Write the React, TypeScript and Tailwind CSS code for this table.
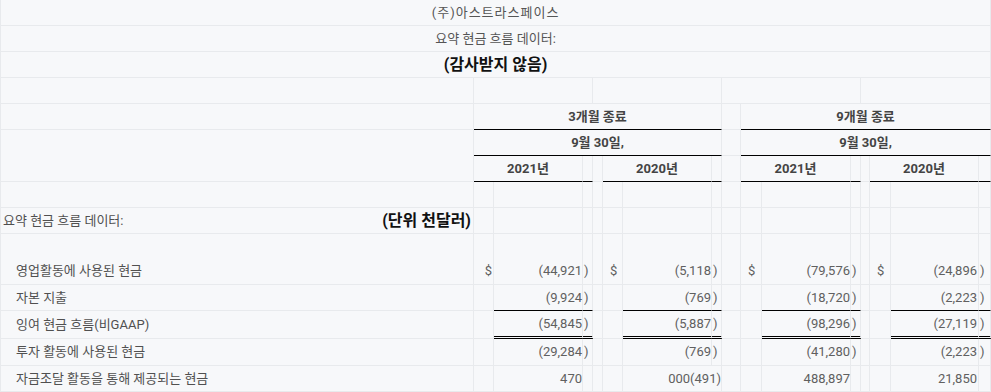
import React from "react"

type Cell = {
  span?: number
  rowSpan?: number
  text?: React.ReactNode
  cls?: string
}

const FONT = { fontFamily: "Roboto, 'Noto Sans CJK KR', sans-serif" }

const base = "border-r border-b border-[#e8eaed] p-0 whitespace-nowrap overflow-visible"
const black = "border-b-black"
const dbl = "border-b-[3px] border-b-black [border-bottom-style:double]"
const num = "text-right pr-0 text-[#606060]"
const par = "text-left pl-px text-[#606060]"
const head = "text-center font-bold text-[#444]"

// one data row: label, then four columns of ($, number, paren)
function dataRow(label: string, vals: [string, string][], dollar: boolean, line?: string): Cell[] {
  const d = dollar ? "$" : ""
  const b = line ?? ""
  return [
    { text: label, cls: "pl-[15px] text-[#505050]" },
    { text: d, cls: "text-right pr-[1px] text-[#606060]" },
    { text: vals[0][0], cls: `${num} ${b}` },
    { text: vals[0][1], cls: `${par} ${b}` },
    {},
    { text: d, cls: "pl-[7px] text-[#606060]" },
    { text: vals[1][0], cls: `${num} ${b}` },
    { text: vals[1][1], cls: `${par} ${b}` },
    {},
    { text: d, cls: "pl-[7px] text-[#606060]" },
    { text: vals[2][0], cls: `${num} ${b}` },
    { text: vals[2][1], cls: `${par} ${b}` },
    {},
    { text: d, cls: "pl-[7px] text-[#606060]" },
    { text: vals[3][0], cls: `${num} pr-[1px] ${b}` },
    { text: vals[3][1], cls: `${par} ${b}` },
  ]
}

const emptyRow: Cell[] = Array.from({ length: 16 }, () => ({}))

const rows: { h: string; cells: Cell[]; rowCls?: string }[] = [
  { h: "h-[26px]", cells: [{ span: 16, text: "(주)아스트라스페이스", cls: "text-center text-[#555] tracking-[1px]" }] },
  { h: "h-[26px]", cells: [{ span: 16, text: "요약 현금 흐름 데이터:", cls: "text-center text-[#555]" }] },
  { h: "h-[26px]", cells: [{ span: 16, text: "(감사받지 않음)", cls: "text-center font-bold text-[16px] text-[#111]" }] },
  { h: "h-[26px]", cells: [{}, { span: 3 }, { span: 4 }, { span: 4 }, { span: 4 }] },
  {
    h: "h-[26px]",
    cells: [
      {},
      { span: 7, text: "3개월 종료", cls: `${head} ${black}` },
      {},
      { span: 7, text: "9개월 종료", cls: `${head} ${black}` },
    ],
  },
  {
    h: "h-[26px]",
    cells: [
      { rowSpan: 2 },
      { span: 7, text: "9월 30일,", cls: `${head} ${black}` },
      {},
      { span: 7, text: "9월 30일,", cls: `${head} ${black}` },
    ],
  },
  {
    h: "h-[26px]",
    cells: [
      { span: 2, text: "2021년", cls: `${head} ${black}` },
      { cls: black },
      {},
      { span: 2, text: "2020년", cls: `${head} ${black}` },
      { cls: black },
      {},
      { span: 2, text: "2021년", cls: `${head} ${black}` },
      { cls: black },
      {},
      { span: 2, text: "2020년", cls: `${head} ${black}` },
      { cls: black },
    ],
  },
  { h: "h-[26px]", cells: emptyRow },
  {
    h: "h-[26px]",
    cells: [
      {
        text: (
          <div className="flex items-center justify-between pl-[2px] pr-[2px]">
            <span className="text-[#505050]">요약 현금 흐름 데이터:</span>
            <span className="font-bold text-[16px] text-[#111]">(단위 천달러)</span>
          </div>
        ),
      },
      ...emptyRow.slice(1),
    ],
  },
  {
    h: "h-[51px]",
    rowCls: "[&>td]:align-bottom [&>td]:pb-[4px]",
    cells: dataRow(
      "영업활동에 사용된 현금",
      [
        ["(44,921", ")"],
        ["(5,118", ")"],
        ["(79,576", ")"],
        ["(24,896", ")"],
      ],
      true
    ),
  },
  {
    h: "h-[26px]",
    cells: dataRow(
      "자본 지출",
      [
        ["(9,924", ")"],
        ["(769", ")"],
        ["(18,720", ")"],
        ["(2,223", ")"],
      ],
      false,
      black
    ),
  },
  {
    h: "h-[28px]",
    cells: dataRow(
      "잉여 현금 흐름(비GAAP)",
      [
        ["(54,845", ")"],
        ["(5,887", ")"],
        ["(98,296", ")"],
        ["(27,119", ")"],
      ],
      false,
      dbl
    ),
  },
  {
    h: "h-[27px]",
    cells: dataRow(
      "투자 활동에 사용된 현금",
      [
        ["(29,284", ")"],
        ["(769", ")"],
        ["(41,280", ")"],
        ["(2,223", ")"],
      ],
      false
    ),
  },
  {
    h: "h-[26px]",
    cells: (() => {
      const r = dataRow(
        "자금조달 활동을 통해 제공되는 현금",
        [
          ["470", ""],
          ["", ""],
          ["488,897", ""],
          ["21,850", ""],
        ],
        false
      )
      r.splice(6, 2, { span: 2, text: "000(491)", cls: "text-right pr-0 text-[#606060]" })
      return r
    })(),
  },
]

const widths = [474, 20, 89, 10, 10, 20, 89, 10, 19, 21, 89, 10, 9, 21, 88, 12]

export default function App() {
  return (
    <div className="w-[991px] h-[392px] overflow-hidden bg-[#f7f8fa] text-[13px] leading-[18px]" style={FONT}>
      <table className="table-fixed w-[991px] border-separate border-spacing-0">
        <colgroup>
          {widths.map((w, i) => (
            <col key={i} style={{ width: w }} />
          ))}
        </colgroup>
        <tbody>
          {rows.map((row, ri) => (
            <tr key={ri} className={`${row.h} ${row.rowCls ?? ""}`}>
              {row.cells.map((c, ci) => (
                <td
                  key={ci}
                  colSpan={c.span}
                  rowSpan={c.rowSpan}
                  className={`${base} ${ci === 0 && ri !== 6 ? "border-l" : ""} ${c.cls ?? ""}`}
                >
                  {c.text}
                </td>
              ))}
            </tr>
          ))}
        </tbody>
      </table>
    </div>
  )
}
